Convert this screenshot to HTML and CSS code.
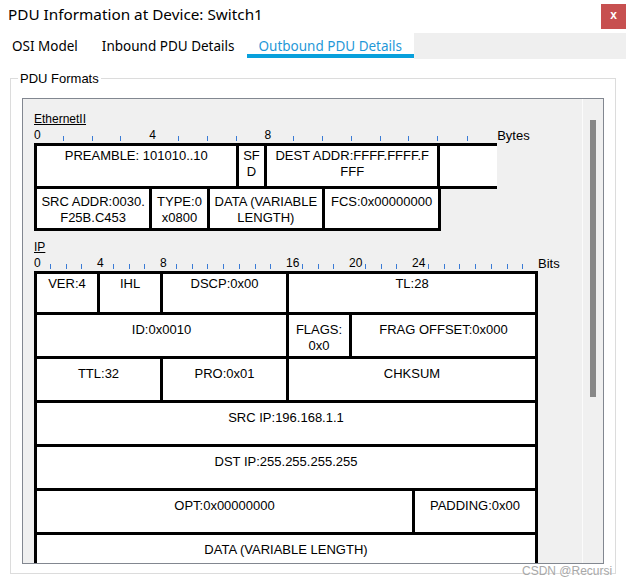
FILE: index.html
```html
<!DOCTYPE html>
<html>
<head>
<meta charset="utf-8">
<link rel="stylesheet" href="styles.css">
</head>
<body>
<div class="window">
  <header class="titlebar">
    <h1 class="title">PDU Information at Device: Switch1</h1>
    <div class="close">x</div>
  </header>
  <nav class="tabs">
    <div class="tab">OSI Model</div>
    <div class="tab">Inbound PDU Details</div>
    <div class="tab active">Outbound PDU Details</div>
    <div class="tab-fill"></div>
  </nav>
  <fieldset class="group">
    <legend>PDU Formats</legend>
    <div class="panel">
      <div class="viewport">
        <section class="pdu eth">
          <div class="pdu-name">EthernetII</div>
          <div class="ruler bytes">
            <span class="num">0</span><i class="tick"></i><i class="tick"></i><i class="tick"></i>
            <span class="num">4</span><i class="tick"></i><i class="tick"></i><i class="tick"></i>
            <span class="num">8</span><i class="tick"></i><i class="tick"></i><i class="tick"></i>
            <i class="tick"></i><i class="tick"></i><i class="tick"></i><i class="tick"></i>
            <span class="unit">Bytes</span>
          </div>
          <div class="fields eth-fields">
            <div class="f s7">PREAMBLE: 101010..10</div>
            <div class="f s1">SF<br>D</div>
            <div class="f s6">DEST ADDR:FFFF.FFFF.F<br>FFF</div>
            <div class="f s2 open"></div>
            <div class="f s4 b n">SRC ADDR:0030.<br>F25B.C453</div>
            <div class="f s2 b n">TYPE:0<br>x0800</div>
            <div class="f s4 b n">DATA (VARIABLE<br>LENGTH)</div>
            <div class="f s4 b n fcs">FCS:0x00000000</div>
          </div>
        </section>
        <section class="pdu ip">
          <div class="pdu-name">IP</div>
          <div class="ruler bits">
            <span class="num">0</span><i class="tick"></i><i class="tick"></i><i class="tick"></i>
            <span class="num">4</span><i class="tick"></i><i class="tick"></i><i class="tick"></i>
            <span class="num">8</span><i class="tick"></i><i class="tick"></i><i class="tick"></i>
            <i class="tick"></i><i class="tick"></i><i class="tick"></i><i class="tick"></i>
            <span class="num">16</span><i class="tick"></i><i class="tick"></i><i class="tick"></i>
            <span class="num">20</span><i class="tick"></i><i class="tick"></i><i class="tick"></i>
            <span class="num">24</span><i class="tick"></i><i class="tick"></i><i class="tick"></i>
            <i class="tick"></i><i class="tick"></i><i class="tick"></i><i class="tick"></i>
            <span class="unit">Bits</span>
          </div>
          <div class="fields ip-fields">
            <div class="f s4">VER:4</div>
            <div class="f s4">IHL</div>
            <div class="f s8">DSCP:0x00</div>
            <div class="f s16 r">TL:28</div>
            <div class="f s16 n">ID:0x0010</div>
            <div class="f s4 n">FLAGS:<br>0x0</div>
            <div class="f s12 r n">FRAG OFFSET:0x000</div>
            <div class="f s8 n">TTL:32</div>
            <div class="f s8 n">PRO:0x01</div>
            <div class="f s16 r n">CHKSUM</div>
            <div class="f s32 r n">SRC IP:196.168.1.1</div>
            <div class="f s32 r n">DST IP:255.255.255.255</div>
            <div class="f s24 n">OPT:0x00000000</div>
            <div class="f s8 r n">PADDING:0x00</div>
            <div class="f s32 r n">DATA (VARIABLE LENGTH)</div>
          </div>
        </section>
      </div>
      <div class="scrollbar"><div class="thumb"></div></div>
    </div>
  </fieldset>
  <div class="watermark">CSDN @Recursi</div>
</div>
</body>
</html>
```

FILE: styles.css
```css
* { box-sizing: border-box; }

html, body {
  margin: 0;
  padding: 0;
  background: #fff;
}

body {
  width: 626px;
  height: 586px;
  overflow: hidden;
  font-family: "Liberation Sans", Arial, sans-serif;
  color: #000;
}

.window {
  position: relative;
  width: 626px;
  height: 586px;
}

/* title bar */
.titlebar {
  display: flex;
  justify-content: space-between;
  align-items: flex-start;
  height: 33px;
}

.title {
  margin: 0;
  padding: 4px 0 0 8px;
  font-family: "Noto Sans", sans-serif;
  font-weight: normal;
  font-size: 15.3px;
  line-height: 20px;
  color: #000;
}

.close {
  margin-top: 4px;
  width: 25px;
  height: 25px;
  background: #c75050;
  color: #fff;
  font-family: "Liberation Sans", sans-serif;
  font-weight: bold;
  font-size: 12px;
  line-height: 23px;
  text-align: center;
}

/* tabs */
.tabs {
  display: flex;
  align-items: flex-start;
  height: 26px;
  font-family: "Noto Sans", sans-serif;
  font-size: 13.5px;
}

.tab {
  height: 25px;
  padding: 5px 12px 0;
  line-height: 16px;
  border-bottom: 4px solid transparent;
  color: #000;
  white-space: nowrap;
}

.tab.active {
  color: #1f98d8;
  border-bottom-color: #08a0dc;
}

.tab-fill {
  flex: 1;
  align-self: stretch;
  background: #efefef;
}

/* group box */
.group {
  margin: 12px 10px 0;
  padding: 0;
  min-width: 0;
  border: 1px solid #dcdcdc;
}

.group legend {
  margin-left: 7px;
  padding: 0 2px;
  font-size: 13px;
  line-height: 15px;
  color: #000;
}

.panel {
  display: flex;
  height: 466px;
  margin: 12px 11px 9px;
  border: 1px solid #828790;
  background: #f0f0f0;
}

.viewport {
  flex: 1;
  overflow: hidden;
  padding: 13px 0 0 11px;
  background: #f0f0f0;
}

.scrollbar {
  width: 21px;
  border-left: 1px solid #fbfbfb;
  background: #f0f0f0;
}

.thumb {
  width: 6px;
  height: 277px;
  margin: 21px 0 0 7px;
  background: #888888;
}

/* pdu diagrams */
.pdu-name {
  font-size: 12px;
  line-height: 15px;
  text-decoration: underline;
}

.ip .pdu-name {
  margin-top: 9px;
}

.ruler {
  display: grid;
  height: 13px;
  margin-top: 2px;
  font-size: 12px;
  line-height: 13px;
  white-space: nowrap;
}

.ruler .unit {
  font-size: 13px;
}

.ruler.bytes {
  grid-template-columns: repeat(14, 28.8px) 30px 30px auto;
}

.ruler.bits {
  grid-template-columns: repeat(32, 15.75px) auto;
}

.tick {
  align-self: end;
  height: 5px;
  margin-bottom: 1px;
  border-left: 1px solid #3a7bd5;
}

.fields {
  display: grid;
  margin-top: 1px;
  font-size: 13px;
  line-height: 16px;
}

.eth-fields {
  grid-template-columns: repeat(14, 28.8px) 30px 30px;
  grid-template-rows: 43px 45px;
  width: max-content;
}

.ip-fields {
  width: 504px;
  grid-template-columns: repeat(32, 1fr);
  grid-template-rows: 41px 44px 44px 44px 44px 44px 44px;
}

.f {
  padding-top: 2px;
  border-top: 3px solid #000;
  border-left: 3px solid #000;
  background: #fff;
  text-align: center;
  white-space: nowrap;
  overflow: visible;
}

.f.n { padding-top: 5px; }
.ip-fields .f.n { padding-top: 7px; }
.f.b { border-bottom: 3px solid #000; }
.f.r { border-right: 3px solid #000; }
.f.open { border-bottom: 3px solid #000; margin-bottom: -3px; }
.f.fcs { border-right: 3px solid #000; margin-right: -4px; }

.s1 { grid-column: span 1; }
.s2 { grid-column: span 2; }
.s4 { grid-column: span 4; }
.s6 { grid-column: span 6; }
.s7 { grid-column: span 7; }
.s8 { grid-column: span 8; }
.s12 { grid-column: span 12; }
.s16 { grid-column: span 16; }
.s24 { grid-column: span 24; }
.s32 { grid-column: span 32; }

/* watermark */
.watermark {
  position: absolute;
  left: 522px;
  top: 564px;
  font-size: 12px;
  line-height: 14px;
  color: #a8a8a8;
  text-shadow: 0 0 2px #fff;
}
```
